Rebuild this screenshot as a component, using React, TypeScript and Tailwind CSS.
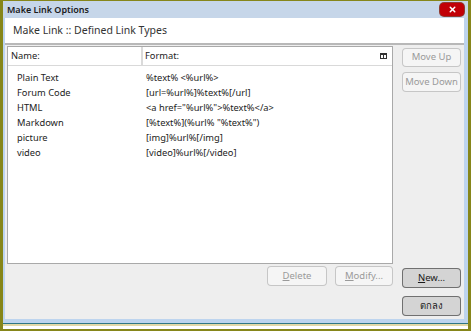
import { X } from "lucide-react";

const rows = [
  { name: "Plain Text", format: "%text% <%url%>" },
  { name: "Forum Code", format: "[url=%url%]%text%[/url]" },
  { name: "HTML", format: '<a href="%url%">%text%</a>' },
  { name: "Markdown", format: '[%text%](%url% "%text%")' },
  { name: "picture", format: "[img]%url%[/img]" },
  { name: "video", format: "[video]%url%[/video]" },
];

function Btn({
  children,
  disabled,
  className = "",
}: {
  children: React.ReactNode;
  disabled?: boolean;
  className?: string;
}) {
  const tone = disabled
    ? "bg-neutral-100 text-[#9a9a9a] ring-[#c6c6c6]"
    : "bg-neutral-300 text-[#1a1a1a] ring-[#707070]";
  return (
    <div className={`flex items-center justify-center rounded-sm ring-1 ring-inset text-[9.5px] ${tone} ${className}`}>
      {children}
    </div>
  );
}

export default function App() {
  return (
    <div
      className="w-[471px] h-[331px] bg-[#86861a] pl-[3px] pr-[3px] pt-[1px] pb-[2px]"
      style={{ fontFamily: '"Noto Sans", "Noto Sans CJK SC", sans-serif' }}
    >
      <div className="flex h-full flex-col bg-[#fbf8e6]">
        {/* Title bar */}
        <div className="flex h-[17px] items-center justify-between bg-[#c6d6e9] pl-[4px] pr-[4px]">
          <span className="text-[9px] font-semibold text-[#1b1b1b]">Make Link Options</span>
          <span className="flex h-[13px] w-[24px] items-center justify-center rounded-sm bg-red-700 ring-1 ring-[#8e3b32]">
            <X size={9} color="#ffffff" strokeWidth={4} />
          </span>
        </div>

        {/* Frame + content */}
        <div className="flex flex-1 flex-col border-b-4 border-l-2 border-r-4 border-[#bdd4ee]">
          <div className="flex h-[27px] items-center border-b-2 border-[#b8b8b8] bg-white pl-[8px] text-[10.5px] text-[#333]">
            Make Link :: Defined Link Types
          </div>

          <div className="flex flex-1 bg-[#eeeeee] pl-[2px] pt-[1px]">
            {/* Left: list + buttons */}
            <div className="flex w-[386px] flex-col">
              <div className="h-[218px] border border-[#a9a9a9] bg-white">
                <div className="flex h-[19px] items-center border-b border-[#d9d9d9] text-[9.3px] text-[#222]">
                  <div className="flex h-full w-[135px] items-center border-r-2 border-[#dadada] pl-[3px]">Name:</div>
                  <div className="flex h-full flex-1 items-center justify-between pl-[2px] pr-[5px]">
                    <span>Format:</span>
                    <svg width="7" height="6" viewBox="0 0 7 6">
                      <rect x="0" y="0" width="7" height="6" fill="#333" />
                      <rect x="1" y="2" width="2" height="3" fill="#fff" />
                      <rect x="4" y="2" width="2" height="3" fill="#fff" />
                    </svg>
                  </div>
                </div>
                <div className="pt-[4px] text-[9.3px] text-[#222]">
                  {rows.map((r) => (
                    <div key={r.name} className="flex h-[15px] items-center">
                      <div className="w-[138px] pl-[9px]">{r.name}</div>
                      <div className="whitespace-pre">{r.format}</div>
                    </div>
                  ))}
                </div>
              </div>
              <div className="mt-[2px] flex justify-end gap-[8px]">
                <Btn disabled className="h-[20px] w-[60px]">
                  <span><u>D</u>elete</span>
                </Btn>
                <Btn disabled className="h-[20px] w-[58px]">
                  <span><u>M</u>odify...</span>
                </Btn>
              </div>
            </div>

            {/* Right buttons */}
            <div className="ml-[9px] flex w-[59px] flex-col pt-[2px]">
              <Btn disabled className="h-[19px]">Move Up</Btn>
              <Btn disabled className="mt-[5px] h-[20px]">Move Down</Btn>
              <div className="flex-1" />
              <Btn className="h-[20px]">
                <span><u>N</u>ew...</span>
              </Btn>
              <Btn className="mt-[8px] mb-[3px] h-[20px]">ตกลง</Btn>
            </div>
          </div>
        </div>
        <div className="h-[1px] bg-[#2e7686]" />
        <div className="h-[2px] bg-[#e2d9a8]" />
        <div className="h-[3px] bg-white" />
      </div>
    </div>
  );
}
